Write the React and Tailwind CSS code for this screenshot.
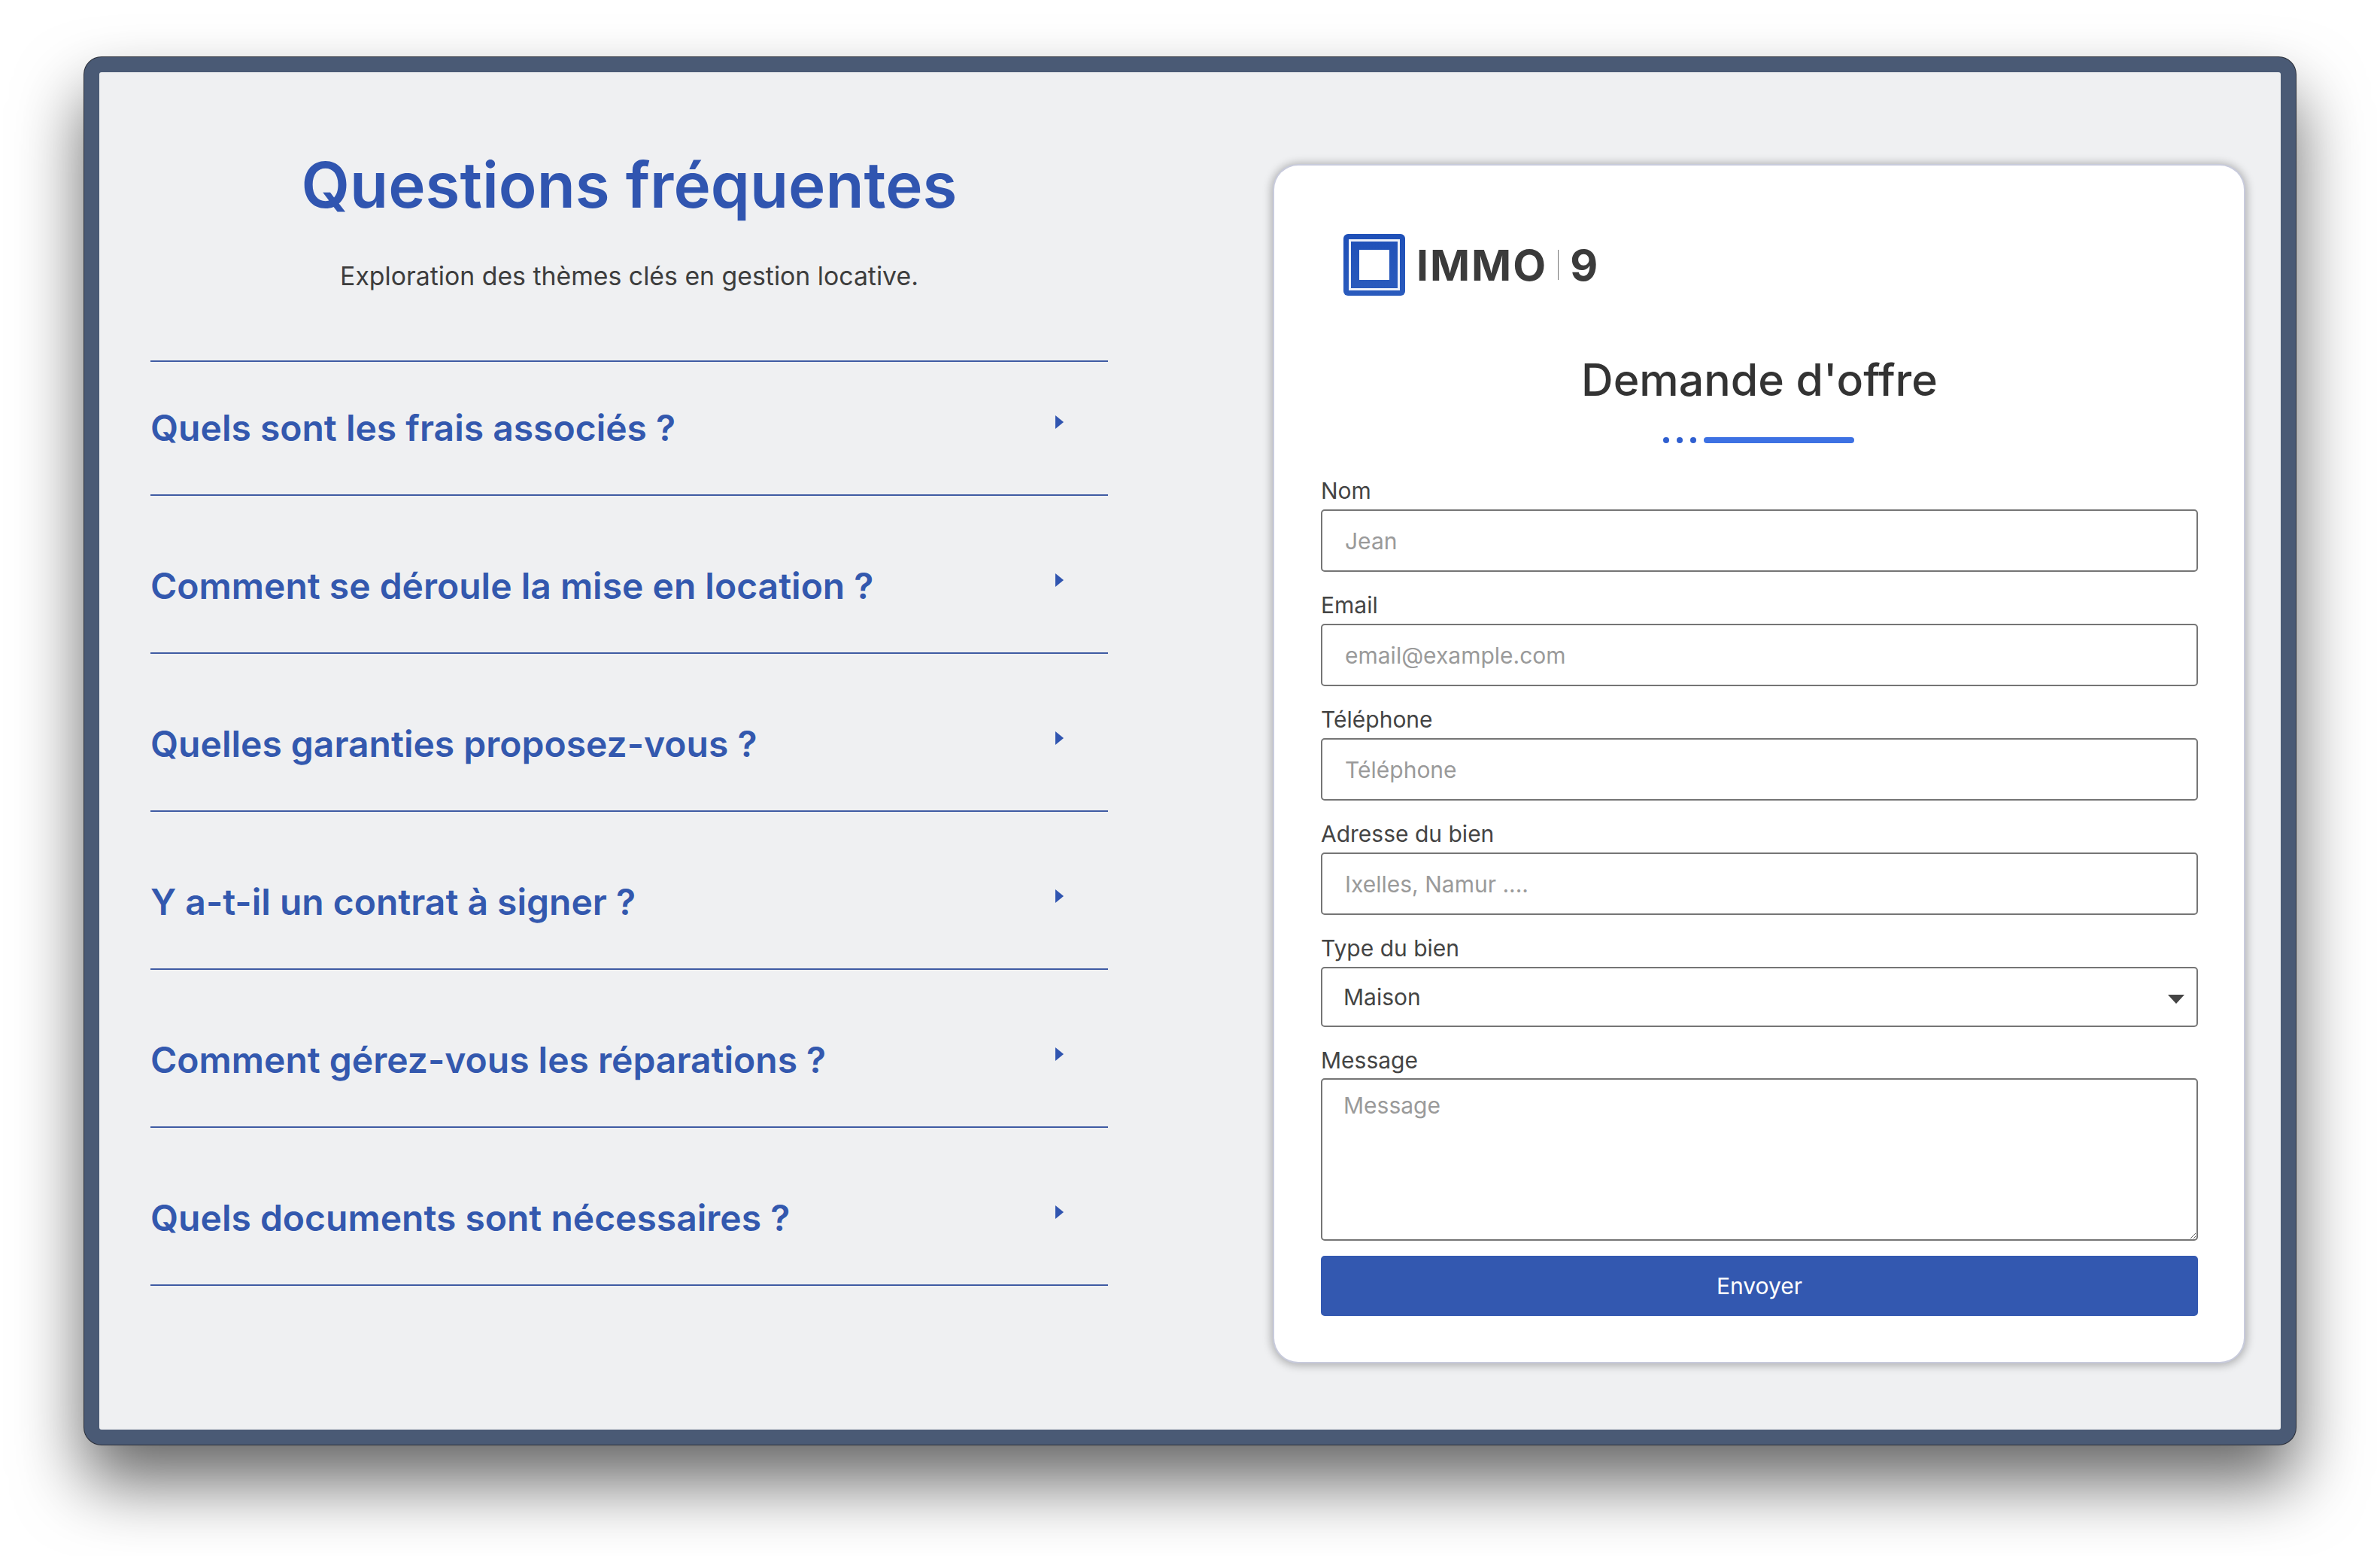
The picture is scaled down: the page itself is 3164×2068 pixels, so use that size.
import React from "react";

const faqs = [
  "Quels sont les frais associés ?",
  "Comment se déroule la mise en location ?",
  "Quelles garanties proposez-vous ?",
  "Y a-t-il un contrat à signer ?",
  "Comment gérez-vous les réparations ?",
  "Quels documents sont nécessaires ?",
];

function Caret() {
  return (
    <svg width="11" height="18" viewBox="0 0 11 18" className="mt-[-17px] mr-[59px] shrink-0">
      <path d="M0 0L11 9L0 18Z" fill="#3055b0" />
    </svg>
  );
}

function Logo() {
  return (
    <svg width="82" height="82" viewBox="0 0 82 82" className="shrink-0">
      <defs>
        <linearGradient id="lg" x1="0" y1="0" x2="0" y2="1">
          <stop offset="0" stopColor="#1f50b8" />
          <stop offset="1" stopColor="#2a5bbd" />
        </linearGradient>
      </defs>
      <rect width="82" height="82" rx="6" fill="url(#lg)" />
      <rect x="8.5" y="8.5" width="65" height="65" fill="none" stroke="#eef2fa" strokeWidth="3" />
      <rect x="21" y="21" width="40" height="40" fill="#ffffff" />
    </svg>
  );
}

const inputCls =
  "block w-full h-[83px] rounded-[5px] border-2 border-[#757575] bg-white pl-[30px] pr-4 text-[30px] text-[#444] font-['Inter',sans-serif] placeholder:text-[#9a9a9a] outline-none";
const labelCls = "block h-[69px] pt-[22px] text-[30px] leading-[44px] text-[#444] font-['Inter',sans-serif]";

function Field({ label, placeholder }) {
  return (
    <div>
      <label className={labelCls}>{label}</label>
      <input className={inputCls} placeholder={placeholder} readOnly />
    </div>
  );
}

export default function App() {
  return (
    <div className="w-[3164px] h-[2068px] bg-white pt-[76px] pl-[112px] overflow-hidden">
      <div className="w-[2940px] h-[1844px] rounded-[23px] border-[20px] border-[#4a5a75] bg-[#eff0f2] shadow-[0_0_0_1px_#2a2e38,0_50px_90px_rgba(0,0,0,0.6)] flex items-start pl-[68px]">
        <section className="w-[1273px] shrink-0">
          <h1 className="mt-[90px] text-center text-[83.5px] leading-[120px] font-semibold text-[#3055b0] font-['Inter',sans-serif]">
            Questions fréquentes
          </h1>
          <p className="mt-[37px] text-center text-[33.8px] leading-[48px] text-[#3d3d3d] font-['Inter',sans-serif]">
            Exploration des thèmes clés en gestion locative.
          </p>
          <div className="mt-[88px] border-t-2 border-[#3f5ba3]">
            {faqs.map((q, i) => (
              <div
                key={q}
                className={`flex items-center justify-between h-[176px] ${i > 0 ? "mt-[32px]" : ""}`}
              >
                <span className="text-[48px] leading-[70px] font-semibold text-[#3358ae] font-['Inter',sans-serif]">{q}</span>
                <Caret />
              </div>
            )).flatMap((row, i) => [row, <div key={`l${i}`} className="border-b-2 border-[#3f5ba3]" />])}
          </div>
        </section>

        <section className="ml-[221px] mt-[124px] w-[1289px] h-[1590px] shrink-0 rounded-[32px] bg-white pl-[62px] pr-[61px] shadow-[0_0_0_2px_#c8cbdc,0_1px_12px_4px_rgba(0,0,0,0.28)]">
          <div className="ml-[30px] flex items-center pt-[91px]">
            <Logo />
            <span className="ml-[15px] text-[57px] leading-none font-bold tracking-[2px] text-[#3b3b3b] font-['Inter',sans-serif]">IMMO</span>
            <span className="ml-[14px] h-[40px] w-[1px] bg-[#777]" />
            <span className="ml-[15px] text-[57px] leading-none font-bold text-[#3b3b3b] font-['Inter',sans-serif]">9</span>
          </div>
          <h2 className="mt-[72px] text-center text-[59px] leading-[80px] font-medium text-[#333] font-['Inter',sans-serif]">
            Demande d'offre
          </h2>
          <div className="mt-[36px] flex items-center justify-center gap-[10px] pr-[2px]">
            <span className="size-[8px] rounded-full bg-[#2f5fd0]" />
            <span className="size-[8px] rounded-full bg-[#2f5fd0]" />
            <span className="size-[8px] rounded-full bg-[#2f5fd0]" />
            <span className="h-[8px] w-[200px] rounded-full bg-[#3d71e3]" />
          </div>
          <form>
            <div className="mt-[19px]">
              <Field label="Nom" placeholder="Jean" />
            </div>
            <Field label="Email" placeholder="email@example.com" />
            <Field label="Téléphone" placeholder="Téléphone" />
            <Field label="Adresse du bien" placeholder="Ixelles, Namur ...." />
            <div>
              <label className={labelCls}>Type du bien</label>
              <div className="relative">
                <select
                  defaultValue="Maison"
                  className="block w-full h-[80px] appearance-none rounded-[5px] border-2 border-[#757575] bg-white pl-[28px] text-[30px] text-[#444] font-['Inter',sans-serif] outline-none"
                >
                  <option>Maison</option>
                  <option>Appartement</option>
                </select>
                <svg width="22" height="12" viewBox="0 0 22 12" className="absolute right-[18px] top-[37px]">
                  <path d="M0 0H22L11 12Z" fill="#444" />
                </svg>
              </div>
            </div>
            <div>
              <label className={`${labelCls} !h-[68px]`}>Message</label>
              <textarea
                placeholder="Message"
                className="block w-full h-[216px] rounded-[5px] border-2 border-[#757575] bg-white px-[28px] py-[12px] text-[30px] text-[#444] font-['Inter',sans-serif] placeholder:text-[#9a9a9a] outline-none"
              />
            </div>
            <button type="button" className="mt-[20px] block w-full h-[80px] rounded-[5px] bg-[#3358b0] text-[30px] text-white font-['Inter',sans-serif]">
              Envoyer
            </button>
          </form>
        </section>
      </div>
    </div>
  );
}
